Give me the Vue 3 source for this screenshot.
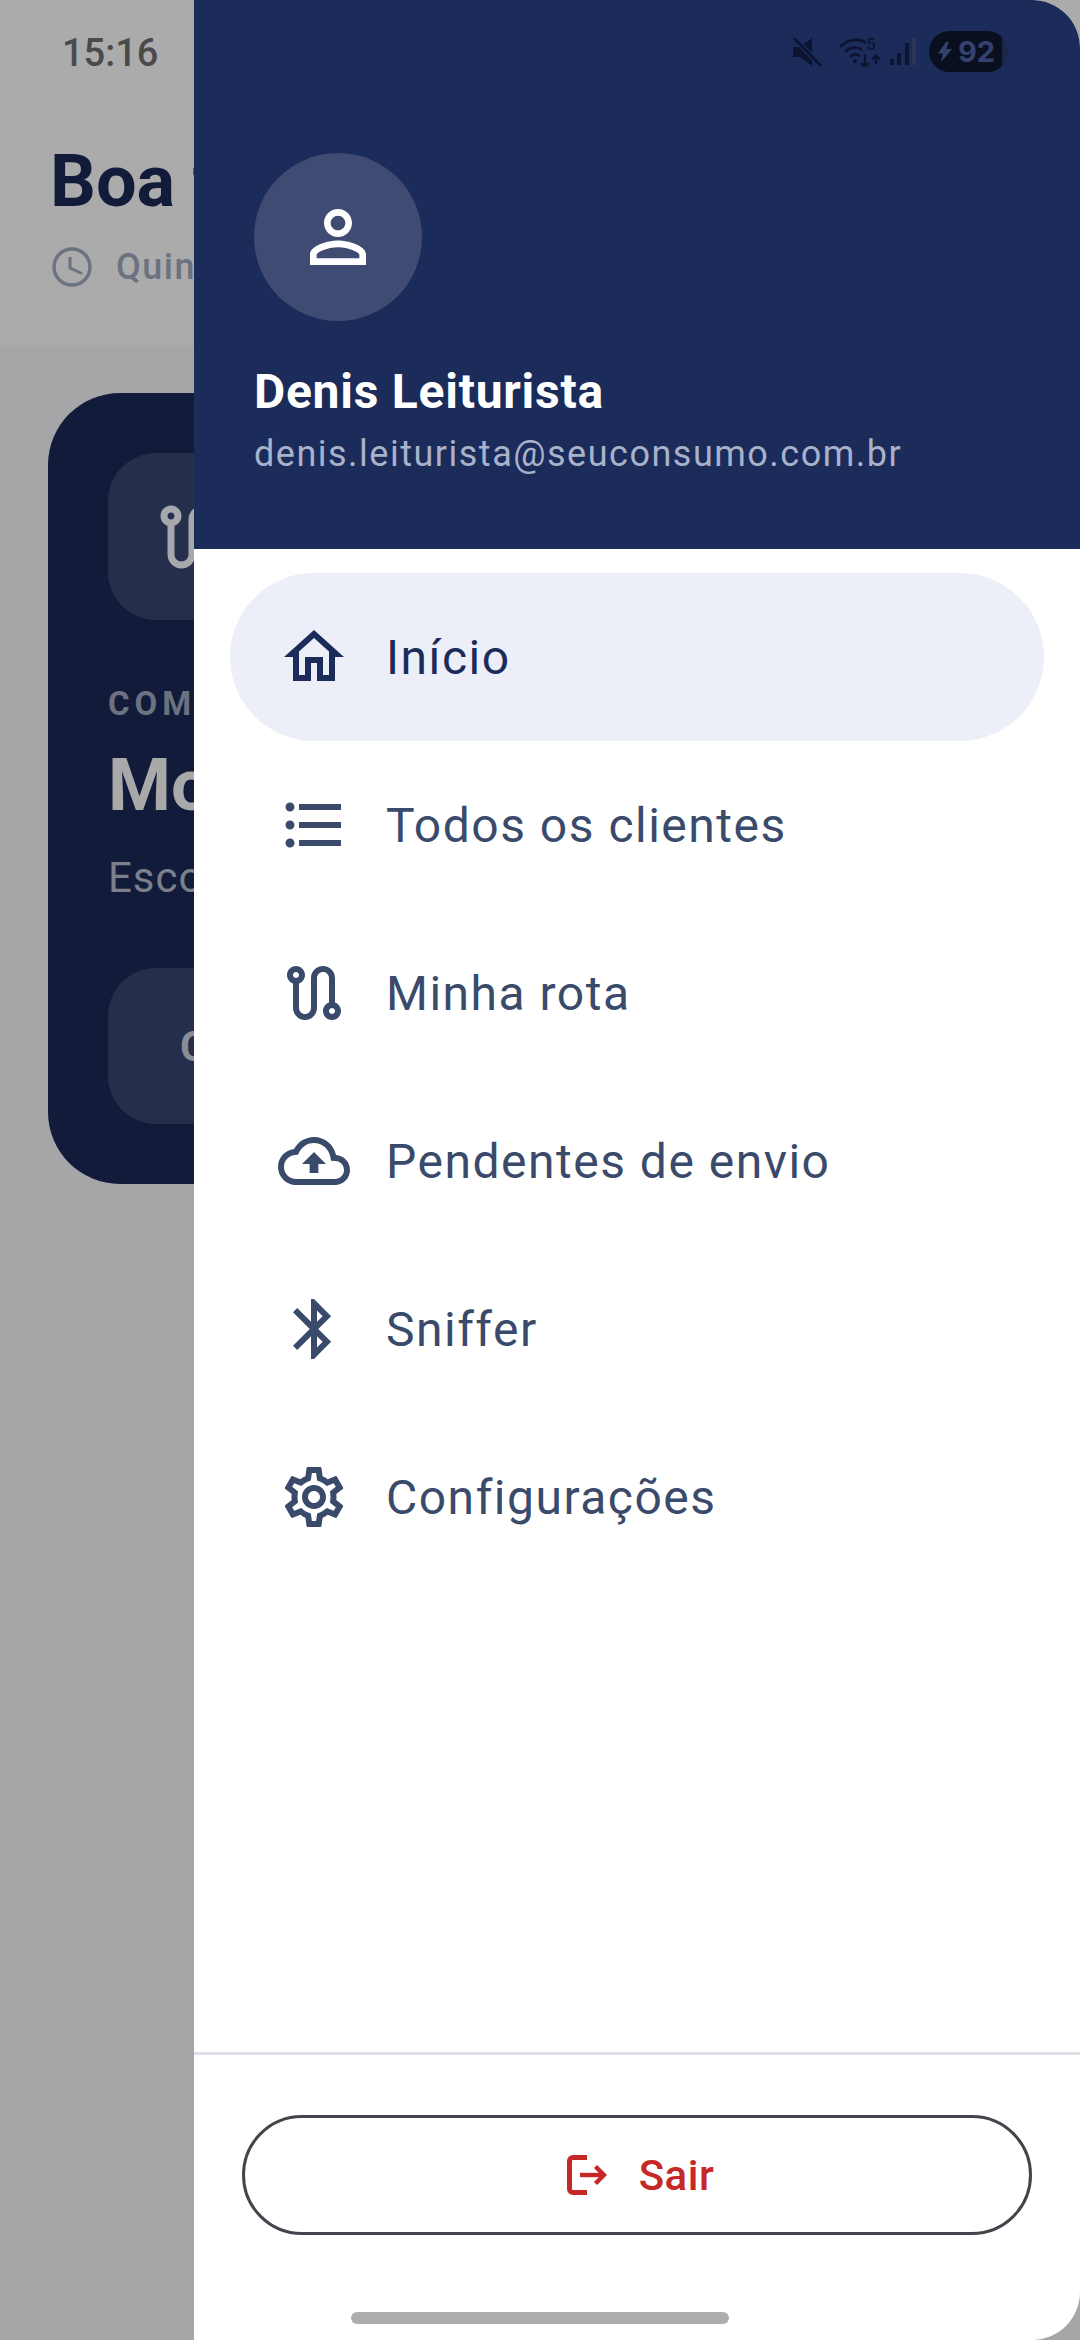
<script setup>
const items = [
  { label: 'Início', active: true, d: 'M12 5.69l5 4.5V18h-2v-6H9v6H7v-7.81l5-4.5M12 3L2 12h3v8h6v-6h2v6h6v-8h3L12 3z' },
  { label: 'Todos os clientes', d: 'M4 10.5c-.83 0-1.5.67-1.5 1.5s.67 1.5 1.5 1.5 1.5-.67 1.5-1.5-.67-1.5-1.5-1.5zm0-6c-.83 0-1.5.67-1.5 1.5S3.17 7.5 4 7.5 5.5 6.83 5.5 6 4.83 4.5 4 4.5zm0 12c-.83 0-1.5.68-1.5 1.5s.68 1.5 1.5 1.5 1.5-.68 1.5-1.5-.67-1.5-1.5-1.5zM7 19h14v-2H7v2zm0-6h14v-2H7v2zm0-8v2h14V5H7z' },
  { label: 'Minha rota', d: 'M19 15.18V7c0-2.21-1.79-4-4-4s-4 1.79-4 4v10c0 1.1-.9 2-2 2s-2-.9-2-2V8.82C8.16 8.4 9 7.3 9 6c0-1.66-1.34-3-3-3S3 4.34 3 6c0 1.3.84 2.4 2 2.82V17c0 2.21 1.79 4 4 4s4-1.79 4-4V7c0-1.1.9-2 2-2s2 .9 2 2v8.18c-1.16.41-2 1.51-2 2.82 0 1.66 1.34 3 3 3s3-1.34 3-3c0-1.3-.84-2.4-2-2.82zM6 7c-.55 0-1-.45-1-1s.45-1 1-1 1 .45 1 1-.45 1-1 1zm12 12c-.55 0-1-.45-1-1s.45-1 1-1 1 .45 1 1-.45 1-1 1z' },
  { label: 'Pendentes de envio', d: 'M19.35 10.04C18.67 6.59 15.64 4 12 4 9.11 4 6.6 5.64 5.35 8.04 2.34 8.36 0 10.91 0 14c0 3.31 2.69 6 6 6h13c2.76 0 5-2.24 5-5 0-2.64-2.05-4.78-4.65-4.96zM19 18H6c-2.21 0-4-1.79-4-4 0-2.05 1.53-3.76 3.56-3.97l1.07-.11.5-.95C8.08 7.14 9.94 6 12 6c2.62 0 4.88 1.86 5.39 4.43l.3 1.5 1.53.11c1.56.1 2.78 1.41 2.78 2.96 0 1.65-1.35 3-3 3zM8 13h2.55v3h2.9v-3H16l-4-4z' },
  { label: 'Sniffer', d: 'M17.71 7.71L12 2h-1v7.59L6.41 5 5 6.41 10.59 12 5 17.59 6.41 19 11 14.41V22h1l5.71-5.71-4.3-4.29 4.3-4.29zM13 5.83l1.88 1.88L13 9.59V5.83zm1.88 10.46L13 18.17v-3.76l1.88 1.88z' },
  { label: 'Configurações', d: 'M19.43 12.98c.04-.32.07-.64.07-.98 0-.34-.03-.66-.07-.98l2.11-1.65c.19-.15.24-.42.12-.64l-2-3.46c-.09-.16-.26-.25-.44-.25-.06 0-.12.01-.17.03l-2.49 1c-.52-.4-1.08-.73-1.69-.98l-.38-2.65C14.46 2.18 14.25 2 14 2h-4c-.25 0-.46.18-.49.42l-.38 2.65c-.61.25-1.17.59-1.69.98l-2.49-1c-.06-.02-.12-.03-.18-.03-.17 0-.34.09-.43.25l-2 3.46c-.13.22-.07.49.12.64l2.11 1.65c-.04.32-.07.65-.07.98 0 .33.03.66.07.98l-2.11 1.65c-.19.15-.24.42-.12.64l2 3.46c.09.16.26.25.44.25.06 0 .12-.01.17-.03l2.49-1c.52.4 1.08.73 1.69.98l.38 2.65c.03.24.24.42.49.42h4c.25 0 .46-.18.49-.42l.38-2.65c.61-.25 1.17-.59 1.69-.98l2.49 1c.06.02.12.03.18.03.17 0 .34-.09.43-.25l2-3.46c.12-.22.07-.49-.12-.64l-2.11-1.65zm-1.98-1.71c.04.31.05.52.05.73 0 .21-.02.43-.05.73l-.14 1.13.89.7 1.08.84-.7 1.21-1.27-.51-1.04-.42-.9.68c-.43.32-.84.56-1.25.73l-1.06.43-.16 1.13-.2 1.35h-1.4l-.19-1.35-.16-1.13-1.06-.43c-.43-.18-.83-.41-1.23-.71l-.91-.7-1.06.43-1.27.51-.7-1.21 1.08-.84.89-.7-.14-1.13c-.03-.31-.05-.54-.05-.74s.02-.43.05-.73l.14-1.13-.89-.7-1.08-.84.7-1.21 1.27.51 1.04.42.9-.68c.43-.32.84-.56 1.25-.73l1.06-.43.16-1.13.2-1.35h1.39l.19 1.35.16 1.13 1.06.43c.43.18.83.41 1.23.71l.91.7 1.06-.43 1.27-.51.7 1.21-1.07.85-.89.7.14 1.13zM12 8c-2.21 0-4 1.79-4 4s1.79 4 4 4 4-1.79 4-4-1.79-4-4-4zm0 6c-1.1 0-2-.9-2-2s.9-2 2-2 2 .9 2 2-.9 2-2 2z' }
]
</script>

<template>
  <div class="screen">
    <div class="backdrop">
      <header class="app-head">
        <div class="clock">15:16</div>
        <h1 class="greet">Boa tarde</h1>
        <div class="date">
          <svg class="date-ico" viewBox="0 0 40 40" fill="none" stroke="#6b7280" stroke-width="3.4">
            <circle cx="20" cy="20" r="18" />
            <path d="M18 10v11l12 5.500" stroke-width="3" />
          </svg>
          <span>Quinta</span>
        </div>
      </header>
      <section class="card">
        <div class="card-ico">
          <svg viewBox="0 0 24 24" class="card-route"><path fill="#a6a8ae" d="M19 15.18V7c0-2.21-1.79-4-4-4s-4 1.79-4 4v10c0 1.1-.9 2-2 2s-2-.9-2-2V8.82C8.16 8.4 9 7.3 9 6c0-1.66-1.34-3-3-3S3 4.34 3 6c0 1.3.84 2.4 2 2.82V17c0 2.21 1.79 4 4 4s4-1.79 4-4V7c0-1.1.9-2 2-2s2 .9 2 2v8.18c-1.16.41-2 1.51-2 2.82 0 1.66 1.34 3 3 3s3-1.34 3-3c0-1.3-.84-2.4-2-2.82zM6 7c-.55 0-1-.45-1-1s.45-1 1-1 1 .45 1 1-.45 1-1 1z"/></svg>
        </div>
        <div class="card-over">COMECE</div>
        <div class="card-title">Modo</div>
        <div class="card-sub">Escolha</div>
        <div class="card-btn">Começar</div>
      </section>
    </div>

    <aside class="drawer">
      <div class="drawer-head">
        <div class="status">
          <svg class="st-mute" viewBox="0 0 29 28" fill="#0d1431">
            <path d="M0 9h7l12-9v28L7 19H0z" />
            <path d="M1 0l27 28" stroke="#1b2b5a" stroke-width="5.500" />
            <path d="M1 0l27 28" stroke="#0d1431" stroke-width="2.800" />
          </svg>
          <div class="st-wifi">
            <svg viewBox="0 0 41 30" fill="none" stroke="#0d1431" stroke-width="2.600">
              <path d="M1 10C8 2 21 1 27 6" />
              <path d="M6 15c5-5 12-6 17-2" />
              <path d="M11 20c3-3 7-3 10-1" />
              <circle cx="16" cy="24" r="2.200" fill="#0d1431" stroke="none" />
              <path d="M26 17.500V30M22 26l4 4 4-4M37 27.500V18.500M33 22.500l4-4 4 4" stroke-width="2.400" />
            </svg>
            <span class="st-five">5</span>
          </div>
          <div class="st-signal">
            <i class="b1"></i><i class="b2"></i><i class="b3"></i><i class="b4"></i>
          </div>
          <div class="st-batt">
            <svg viewBox="0 0 14 20" class="st-bolt"><path fill="#35426f" d="M8 0L0 11.500h5L3 20l11-13H8l3-7z" /></svg>
            <span>92</span>
          </div>
        </div>
        <div class="avatar">
          <svg viewBox="0 0 24 24" class="avatar-ico"><path fill="#fff" d="M12 5.9c1.16 0 2.1.94 2.1 2.1s-.94 2.1-2.1 2.1S9.9 9.16 9.9 8s.94-2.1 2.1-2.1m0 9c2.97 0 6.1 1.46 6.1 2.1v1.1H5.9V17c0-.64 3.13-2.1 6.1-2.1M12 4C9.79 4 8 5.79 8 8s1.79 4 4 4 4-1.79 4-4-1.79-4-4-4zm0 9c-2.67 0-8 1.34-8 4v3h16v-3c0-2.66-5.33-4-8-4z"/></svg>
        </div>
        <div class="name">Denis Leiturista</div>
        <div class="email">denis.leiturista@seuconsumo.com.br</div>
      </div>

      <nav class="menu">
        <div v-for="item in items" :key="item.label" class="row" :class="{ active: item.active }">
          <svg viewBox="0 0 24 24" class="row-ico"><path fill="currentColor" :d="item.d" /></svg>
          <span class="row-label">{{ item.label }}</span>
        </div>
      </nav>

      <footer class="foot">
        <button class="logout">
          <svg viewBox="0 0 40 40" class="logout-ico" fill="none" stroke="currentColor">
            <path d="M20 2.500H6a3.500 3.500 0 0 0-3.500 3.500v28a3.500 3.500 0 0 0 3.500 3.500h14" stroke-width="5" />
            <path d="M13 20h23" stroke-width="4.400" />
            <path d="M28.500 11.500L37 20l-8.500 8.500" stroke-width="4.400" />
          </svg>
          <span>Sair</span>
        </button>
        <div class="home-bar"></div>
      </footer>
    </aside>
  </div>
</template>

<style>
html, body { margin: 0; background: #ababab; }
</style>

<style scoped>
* { box-sizing: border-box; }
.screen {
  position: relative;
  width: 1080px;
  height: 2340px;
  overflow: hidden;
  background: #a6a6a8;
  font-family: Roboto, "Noto Sans", sans-serif;
}
.backdrop { display: flex; flex-direction: column; height: 100%; }
.app-head {
  height: 345px;
  background: #ababab;
  padding: 31px 0 0 50px;
}
.clock {
  margin-left: 12px;
  font-size: 38px;
  line-height: 44px;
  font-weight: 500;
  color: #4a4a4a;
}
.greet {
  margin: 67px 0 0;
  font-size: 72px;
  line-height: 80px;
  font-weight: 700;
  color: #121c3a;
  white-space: nowrap;
}
.date {
  display: flex;
  align-items: center;
  gap: 24px;
  height: 40px;
  margin-top: 25px;
  margin-left: 2px;
  font-size: 36px;
  line-height: 40px;
  font-weight: 500;
  letter-spacing: 1.500px;
  color: #6b7280;
}
.date-ico { width: 40px; height: 40px; flex: none; }
.card {
  margin: 48px 0 0 48px;
  width: 984px;
  height: 791px;
  background: #121c3a;
  border-radius: 72px;
  padding: 60px;
  display: flex;
  flex-direction: column;
  align-items: flex-start;
}
.card-ico {
  width: 168px;
  height: 168px;
  border-radius: 48px;
  background: #252e4a;
  display: flex;
  align-items: center;
  justify-content: center;
}
.card-route { width: 84px; height: 84px; }
.card-over {
  margin-top: 64px;
  font-size: 33px;
  line-height: 40px;
  font-weight: 700;
  letter-spacing: 5px;
  color: #6d7280;
}
.card-title {
  margin-top: 20px;
  font-size: 72px;
  line-height: 84px;
  font-weight: 700;
  color: #a9a9a9;
}
.card-sub {
  margin-top: 25px;
  font-size: 42px;
  line-height: 50px;
  letter-spacing: 1px;
  color: #7c808c;
}
.card-btn {
  flex: none;
  margin-top: 65px;
  width: 864px;
  height: 156px;
  border-radius: 48px;
  background: #252e4a;
  display: flex;
  align-items: center;
  padding-left: 72px;
  font-size: 42px;
  font-weight: 700;
  color: #8a8d96;
}

.drawer {
  position: absolute;
  top: 0;
  left: 194px;
  right: 0;
  bottom: 0;
  background: #fff;
  border-radius: 0 48px 48px 0;
  overflow: hidden;
  display: flex;
  flex-direction: column;
}
.drawer-head {
  position: relative;
  height: 549px;
  background: #1b2b5a;
  padding: 153px 0 0 60px;
}
.status {
  position: absolute;
  top: 31px;
  right: 72px;
  height: 41px;
  display: flex;
  align-items: center;
}
.st-mute { width: 29px; height: 28px; margin-right: 17px; }
.st-wifi { position: relative; width: 41px; height: 30px; margin-right: 10px; }
.st-wifi svg { display: block; width: 41px; height: 30px; }
.st-five {
  position: absolute;
  top: -1px;
  right: 4px;
  font-size: 17px;
  line-height: 16px;
  font-weight: 500;
  color: #0d1431;
}
.st-signal {
  display: flex;
  align-items: flex-end;
  justify-content: space-between;
  width: 26px;
  height: 27px;
  margin-right: 13px;
}
.st-signal i { display: block; width: 4px; background: #0d1431; }
.st-signal .b1 { height: 6px; }
.st-signal .b2 { height: 12px; }
.st-signal .b3 { height: 22px; }
.st-signal .b4 { height: 27px; background: #2a3558; }
.st-batt {
  width: 79px;
  height: 41px;
  border-radius: 21px;
  background: linear-gradient(90deg, #0a0f20 92%, #1c2748 92%);
  display: flex;
  align-items: center;
  padding-left: 9px;
  gap: 6px;
  font-family: Inter, Roboto, sans-serif;
  font-size: 29px;
  font-weight: 700;
  color: #35426f;
}
.st-bolt { width: 14px; height: 20px; }
.avatar {
  width: 168px;
  height: 168px;
  border-radius: 50%;
  background: #3f4b73;
  display: flex;
  align-items: center;
  justify-content: center;
}
.avatar-ico { width: 84px; height: 84px; }
.name {
  margin-top: 43px;
  font-size: 48px;
  line-height: 56px;
  font-weight: 700;
  letter-spacing: 0.750px;
  color: #fff;
  white-space: nowrap;
}
.email {
  margin-top: 11px;
  font-size: 36px;
  line-height: 46px;
  letter-spacing: 1.500px;
  color: #a9b2cb;
  white-space: nowrap;
}
.menu {
  flex: 1;
  padding: 24px 36px 0;
  display: flex;
  flex-direction: column;
}
.row {
  height: 168px;
  flex: none;
  border-radius: 84px;
  padding-left: 48px;
  display: flex;
  align-items: center;
  gap: 36px;
  color: #3a4a6b;
}
.row.active { background: #eceff7; color: #1b2b5a; }
.row-ico { width: 72px; height: 72px; flex: none; }
.row-label {
  font-size: 48px;
  letter-spacing: 1.500px;
  white-space: nowrap;
}
.foot {
  position: relative;
  height: 288px;
  border-top: 3px solid #dde0e8;
  padding: 60px 48px 0;
}
.logout {
  display: flex;
  align-items: center;
  justify-content: center;
  gap: 32px;
  width: 790px;
  height: 120px;
  border: 3px solid #44444c;
  border-radius: 60px;
  background: #fff;
  color: #c62828;
  font-family: Roboto, sans-serif;
  font-size: 42px;
  font-weight: 500;
  letter-spacing: 0.500px;
  padding: 0 0 0 7px;
}
.logout-ico { width: 40px; height: 40px; }
.home-bar {
  position: absolute;
  left: 157px;
  bottom: 16px;
  width: 378px;
  height: 12px;
  border-radius: 6px;
  background: #adadad;
}
</style>
